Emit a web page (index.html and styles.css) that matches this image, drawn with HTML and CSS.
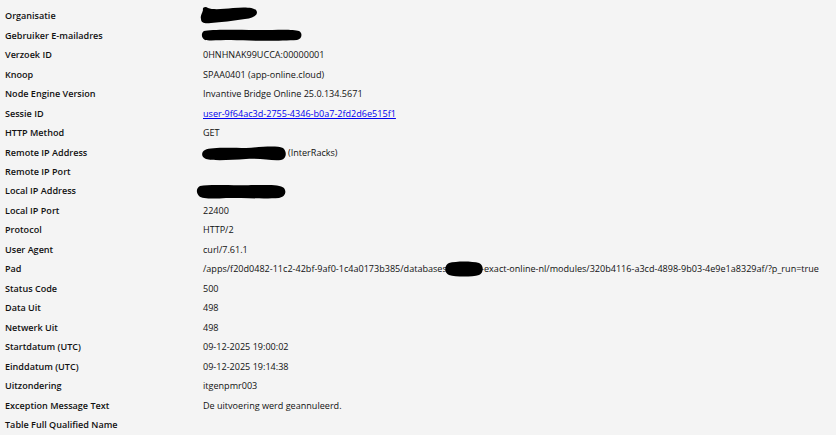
FILE: index.html
```html
<!DOCTYPE html>
<html>
<head>
<meta charset="utf-8">
<link rel="stylesheet" href="styles.css">
</head>
<body>
<div class="details">
  <div class="label">Organisatie</div>
  <div class="value"><svg class="blob blob-org" viewBox="0 0 60 22" width="60" height="22"><path d="M4 6 C3 3 7 2 9 4 C14 6 24 5 34 4 C44 3 54 3 57 6 C60 10 56 14 46 15 C34 17 22 18 12 19 C6 20 2 19 2 15 C1 12 3 10 4 6 Z"/></svg></div>

  <div class="label">Gebruiker E-mailadres</div>
  <div class="value"><svg class="blob blob-mail" viewBox="0 0 102 14" width="102" height="14"><path d="M3 3 C10 1 40 2 60 2 C75 2 92 1 98 3 C102 5 101 11 96 12 C80 13 50 13 30 12 C20 12 8 13 4 12 C0 10 0 5 3 3 Z"/></svg></div>

  <div class="label">Verzoek ID</div>
  <div class="value">0HNHNAK99UCCA:00000001</div>

  <div class="label">Knoop</div>
  <div class="value">SPAA0401 (app-online.cloud)</div>

  <div class="label">Node Engine Version</div>
  <div class="value">Invantive Bridge Online 25.0.134.5671</div>

  <div class="label">Sessie ID</div>
  <div class="value"><a href="#" class="link">user-9f64ac3d-2755-4346-b0a7-2fd2d6e515f1</a></div>

  <div class="label">HTTP Method</div>
  <div class="value">GET</div>

  <div class="label">Remote IP Address</div>
  <div class="value"><svg class="blob blob-rip" viewBox="0 0 86 17" width="86" height="17"><path d="M4 5 C10 2 30 3 45 3 C60 2 75 0 82 3 C86 6 86 14 80 15 C70 16 60 13 45 14 C30 15 12 16 5 14 C0 12 0 7 4 5 Z"/></svg>(InterRacks)</div>

  <div class="label">Remote IP Port</div>
  <div class="value"></div>

  <div class="label">Local IP Address</div>
  <div class="value"><svg class="blob blob-lip" viewBox="0 0 90 17" width="90" height="17"><path d="M4 3 C15 1 40 3 55 2 C70 2 84 1 88 5 C91 9 89 14 83 15 C70 16 50 15 30 15 C18 16 6 16 3 13 C0 10 0 5 4 3 Z"/></svg></div>

  <div class="label">Local IP Port</div>
  <div class="value">22400</div>

  <div class="label">Protocol</div>
  <div class="value">HTTP/2</div>

  <div class="label">User Agent</div>
  <div class="value">curl/7.61.1</div>

  <div class="label">Pad</div>
  <div class="value">/apps/f20d0482-11c2-42bf-9af0-1c4a0173b385/databases/<svg class="blob blob-pad" viewBox="0 0 40 16" width="40" height="16"><path d="M5 2 C12 0 28 0 35 2 C40 4 40 12 35 14 C28 16 12 16 5 14 C0 12 0 4 5 2 Z"/></svg>-exact-online-nl/modules/320b4116-a3cd-4898-9b03-4e9e1a8329af/?p_run=true</div>

  <div class="label">Status Code</div>
  <div class="value">500</div>

  <div class="label">Data Uit</div>
  <div class="value">498</div>

  <div class="label">Netwerk Uit</div>
  <div class="value">498</div>

  <div class="label">Startdatum (UTC)</div>
  <div class="value">09-12-2025 19:00:02</div>

  <div class="label">Einddatum (UTC)</div>
  <div class="value">09-12-2025 19:14:38</div>

  <div class="label">Uitzondering</div>
  <div class="value">itgenpmr003</div>

  <div class="label">Exception Message Text</div>
  <div class="value">De uitvoering werd geannuleerd.</div>

  <div class="label">Table Full Qualified Name</div>
  <div class="value"></div>
</div>
</body>
</html>
```

FILE: styles.css
```css
html, body {
  margin: 0;
  padding: 0;
  background: #f4f4f4;
}
body {
  font-family: "Open Sans", "Noto Sans", sans-serif;
  font-size: 9.07px;
  color: #111;
}
.details {
  display: grid;
  grid-template-columns: 198px auto;
  grid-auto-rows: 19.48px;
  padding: 6px 0 0 5px;
  align-items: center;
}
.label {
  font-weight: 600;
  white-space: nowrap;
}
.value {
  white-space: nowrap;
  display: flex;
  align-items: center;
}
.link {
  color: #0000ee;
  text-decoration: underline;
}
.blob {
  display: block;
  fill: #000;
  flex: none;
}
.blob-org { margin-left: -4px; margin-top: -2px; }
.blob-mail { margin-left: -2px; }
.blob-rip { margin-left: -2px; margin-right: 1px; margin-top: 2px; }
.blob-lip { margin-left: -7px; margin-top: 1px; }
.blob-pad { margin-left: -6px; margin-right: -3px; }
```
